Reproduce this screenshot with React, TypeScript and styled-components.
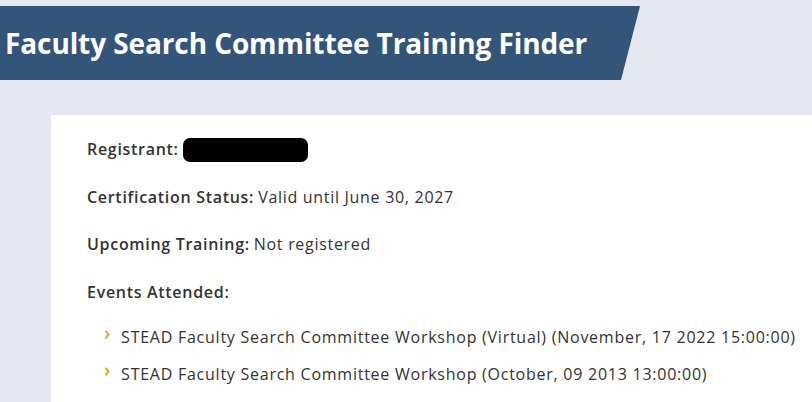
import styled, {createGlobalStyle} from "styled-components";

const GlobalStyle = createGlobalStyle`
  html, body {
    margin: 0;
    padding: 0;
    background: #e4e7f0;
    font-family: "Open Sans", Lato, sans-serif;
    color: #333333;
  }
`;

const Page = styled.div`
  width: 812px;
  height: 402px;
  overflow: hidden;
  padding-top: 6px;
  box-sizing: border-box;
`;

const Banner = styled.div`
  width: 640px;
  height: 74px;
  background: #34557a;
  clip-path: polygon(0 0, 100% 0, 621px 100%, 0 100%);
  display: flex;
  align-items: center;
  padding-left: 5px;
  box-sizing: border-box;
`;

const Title = styled.h1`
  margin: 0;
  color: #ffffff;
  font-size: 28px;
  font-weight: 700;
  letter-spacing: -0.1px;
`;

const Card = styled.div`
  margin: 35px 0 0 51px;
  background: #ffffff;
  padding: 24px 0 0 36px;
  height: 400px;
`;

const Field = styled.p`
  margin: 0 0 26.5px;
  height: 21px;
  font-size: 16px;
  line-height: 21px;
  letter-spacing: 0.7px;
  display: flex;
  align-items: center;
  gap: 4px;
`;

const Label = styled.strong`
  font-weight: 600;
`;

const Redacted = styled.span`
  display: inline-block;
  flex-shrink: 0;
  width: 125px;
  height: 24px;
  background: #000;
  border-radius: 7px;
`;

const Events = styled.ul`
  list-style: none;
  margin: -2px 0 0;
  padding: 0 0 0 17px;
`;

const Event = styled.li`
  display: flex;
  align-items: center;
  gap: 10px;
  font-size: 16px;
  line-height: 21px;
  letter-spacing: 0.75px;
  margin-bottom: 16px;
  white-space: nowrap;
`;

const Chevron = styled.span`
  color: #d9a91f;
  font-size: 19px;
  font-weight: 600;
  position: relative;
  top: -4px;
`;

const events = [
    "STEAD Faculty Search Committee Workshop (Virtual) (November, 17 2022 15:00:00)",
    "STEAD Faculty Search Committee Workshop (October, 09 2013 13:00:00)",
];

function App() {
    return (
        <Page>
            <GlobalStyle/>
            <Banner>
                <Title>Faculty Search Committee Training Finder</Title>
            </Banner>
            <Card>
                <Field><Label>Registrant:</Label><Redacted/></Field>
                <Field><Label>Certification Status:</Label>Valid until June 30, 2027</Field>
                <Field><Label>Upcoming Training:</Label>Not registered</Field>
                <Field><Label>Events Attended:</Label></Field>
                <Events>
                    {events.map((e) => (
                        <Event key={e}><Chevron>›</Chevron>{e}</Event>
                    ))}
                </Events>
            </Card>
        </Page>
    );
}

export default App;
